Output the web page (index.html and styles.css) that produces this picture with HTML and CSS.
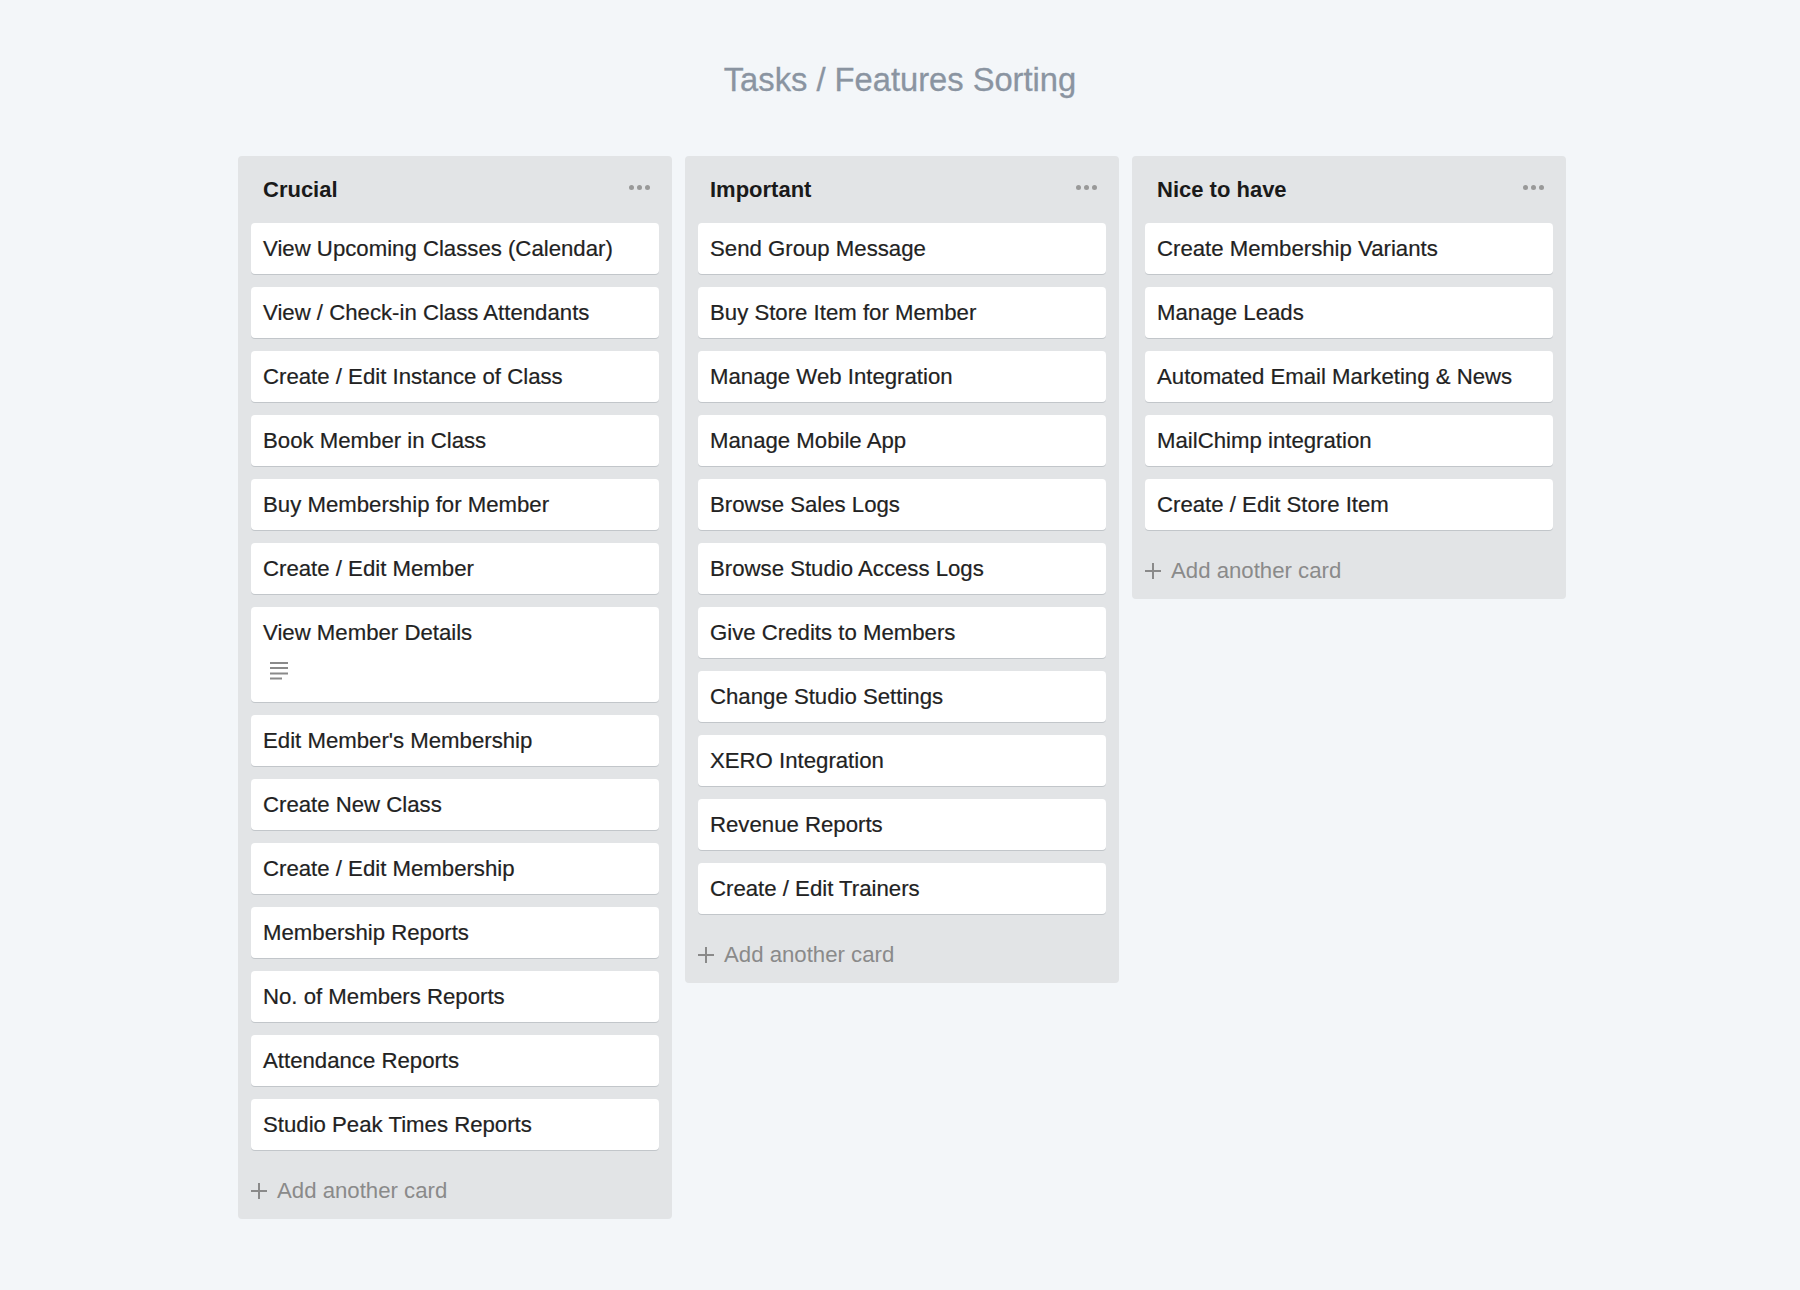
FILE: index.html
```html
<!DOCTYPE html>
<html lang="en">
<head>
<meta charset="utf-8">
<title>Tasks / Features Sorting</title>
<link rel="stylesheet" href="styles.css">
</head>
<body>
<h1 class="page-title">Tasks / Features Sorting</h1>
<div class="board">
  <section class="list">
    <header class="list-header">
      <h2 class="list-title">Crucial</h2>
      <span class="list-menu"><i></i><i></i><i></i></span>
    </header>
    <div class="card">View Upcoming Classes (Calendar)</div>
    <div class="card">View / Check-in Class Attendants</div>
    <div class="card">Create / Edit Instance of Class</div>
    <div class="card">Book Member in Class</div>
    <div class="card">Buy Membership for Member</div>
    <div class="card">Create / Edit Member</div>
    <div class="card card-tall">View Member Details
      <svg class="desc-icon" width="18" height="18" viewBox="0 0 18 18"><rect x="0" y="0" width="18" height="2" fill="#8a8a8a"/><rect x="0" y="5" width="18" height="2" fill="#8a8a8a"/><rect x="0" y="10.5" width="18" height="2" fill="#8a8a8a"/><rect x="0" y="15.5" width="12" height="2" fill="#8a8a8a"/></svg>
    </div>
    <div class="card">Edit Member's Membership</div>
    <div class="card">Create New Class</div>
    <div class="card">Create / Edit Membership</div>
    <div class="card">Membership Reports</div>
    <div class="card">No. of Members Reports</div>
    <div class="card">Attendance Reports</div>
    <div class="card">Studio Peak Times Reports</div>
    <div class="add-card"><span class="plus"></span>Add another card</div>
  </section>
  <section class="list">
    <header class="list-header">
      <h2 class="list-title">Important</h2>
      <span class="list-menu"><i></i><i></i><i></i></span>
    </header>
    <div class="card">Send Group Message</div>
    <div class="card">Buy Store Item for Member</div>
    <div class="card">Manage Web Integration</div>
    <div class="card">Manage Mobile App</div>
    <div class="card">Browse Sales Logs</div>
    <div class="card">Browse Studio Access Logs</div>
    <div class="card">Give Credits to Members</div>
    <div class="card">Change Studio Settings</div>
    <div class="card">XERO Integration</div>
    <div class="card">Revenue Reports</div>
    <div class="card">Create / Edit Trainers</div>
    <div class="add-card"><span class="plus"></span>Add another card</div>
  </section>
  <section class="list">
    <header class="list-header">
      <h2 class="list-title">Nice to have</h2>
      <span class="list-menu"><i></i><i></i><i></i></span>
    </header>
    <div class="card">Create Membership Variants</div>
    <div class="card">Manage Leads</div>
    <div class="card">Automated Email Marketing &amp; News</div>
    <div class="card">MailChimp integration</div>
    <div class="card">Create / Edit Store Item</div>
    <div class="add-card"><span class="plus"></span>Add another card</div>
  </section>
</div>
</body>
</html>
```
FILE: styles.css
```css
html, body {
  margin: 0;
  padding: 0;
}
body {
  background: #f3f6f9;
  font-family: "Liberation Sans", Arial, sans-serif;
  color: #222;
  padding-top: 60px;
  min-height: 1290px;
  box-sizing: border-box;
}
.page-title {
  margin: 0;
  text-align: center;
  font-size: 32.7px;
  line-height: 40px;
  font-weight: normal;
  color: #8a94a1;
  -webkit-text-stroke: 0.3px #8a94a1;
}
.board {
  display: flex;
  justify-content: center;
  align-items: flex-start;
  gap: 13px;
  margin-top: 56px;
  padding-left: 4px;
}
.list {
  width: 434px;
  box-sizing: border-box;
  background: #e2e4e6;
  border-radius: 4px;
  padding: 0 13px;
}
.list-header {
  display: flex;
  align-items: center;
  justify-content: space-between;
  padding: 19.5px 9px 19px 12px;
}
.list-title {
  margin: 0;
  font-size: 22px;
  line-height: 28px;
  font-weight: bold;
  color: #1a1a1a;
}
.list-menu {
  display: flex;
  gap: 3px;
  margin-top: -4px;
}
.list-menu i {
  display: block;
  width: 5px;
  height: 5px;
  border-radius: 50%;
  background: #999;
}
.card {
  background: #fff;
  border-radius: 4px;
  box-shadow: 0 1px 0 #c2c6ca;
  padding: 12.5px 12px 10.5px;
  font-size: 22.2px;
  line-height: 28px;
  margin-bottom: 13px;
  color: #222;
  -webkit-text-stroke: 0.2px #222;
}
.card-tall {
  padding-bottom: 21.5px;
}
.desc-icon {
  display: block;
  margin: 15px 0 0 7px;
}
.add-card {
  display: flex;
  align-items: center;
  gap: 10px;
  font-size: 22.2px;
  line-height: 28px;
  color: #8a8a8a;
  padding: 14.75px 0 13.25px;
}
.plus {
  position: relative;
  width: 16px;
  height: 16px;
  flex: none;
}
.plus::before, .plus::after {
  content: "";
  position: absolute;
  background: #8a8a8a;
}
.plus::before {
  left: 0;
  top: 7px;
  width: 16px;
  height: 2px;
}
.plus::after {
  left: 7px;
  top: 0;
  width: 2px;
  height: 16px;
}
```
